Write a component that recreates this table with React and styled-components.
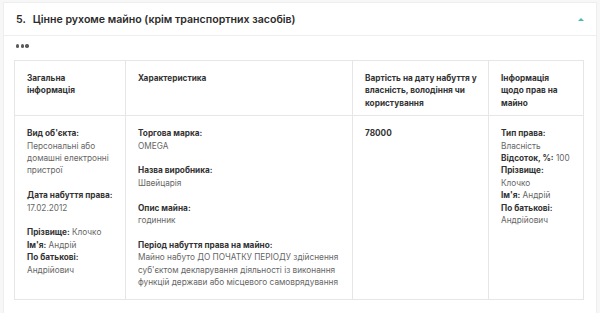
import React from "react";
import styled, { createGlobalStyle } from "styled-components";

const Global = createGlobalStyle`
  html, body { margin: 0; padding: 0; background: #f7f7f7; }
  body { font-family: Inter, "Noto Sans", sans-serif; color: #333; }
`;

const Page = styled.div`
  padding: 2px 3px 0 3px;
  height: 313px;
  box-sizing: border-box;
`;

const Card = styled.section`
  background: #fff;
  border: 1px solid #eeeeee;
  border-bottom: none;
  height: 311px;
  box-sizing: border-box;
`;

const Header = styled.div`
  display: flex;
  align-items: center;
  justify-content: space-between;
  height: 33px;
  box-sizing: border-box;
  padding: 0 12px 0 12px;
  border-bottom: 1px solid #eeeeee;
`;

const Title = styled.h2`
  margin: 0;
  font-size: 10.6px;
  font-weight: 600;
  color: #2b2b2b;
`;

const Num = styled.span`
  margin-right: 7px;
`;

const Caret = styled.span`
  width: 0;
  height: 0;
  border-left: 3px solid transparent;
  border-right: 3px solid transparent;
  border-bottom: 3px solid #4fb9ad;
`;

const Body = styled.div`
  padding: 8px 10px 0 10px;
`;

const Dots = styled.div`
  display: flex;
  gap: 1.3px;
  height: 4px;
  align-items: center;
  margin: 0 0 12px 2px;
`;

const Dot = styled.span`
  width: 3.4px;
  height: 3.4px;
  border-radius: 50%;
  background: #5a5a5a;
`;

const Table = styled.table`
  border-collapse: collapse;
  table-layout: fixed;
  width: 569px;
  font-size: 8.25px;
  line-height: 12.4px;
`;

const Th = styled.th`
  box-sizing: border-box;
  width: ${(p) => p.$w}px;
  text-align: left;
  vertical-align: top;
  font-weight: 700;
  color: #333;
  border: 1px solid #e6e6e6;
  padding: 11px 10px 6px 12px;
  height: 54px;
`;

const Td = styled.td`
  vertical-align: top;
  border: 1px solid #e6e6e6;
  padding: 11px 10px 11px 12px;
  color: #666;
`;

const Group = styled.div`
  margin-bottom: ${(p) => (p.$tight ? 0 : 12.4)}px;
`;

const Label = styled.span`
  font-weight: 700;
  color: #333;
  display: ${(p) => (p.$block ? "block" : "inline")};
`;

const Value = styled.span`
  color: #666;
  display: ${(p) => (p.$block ? "block" : "inline")};
`;

const Strong = styled.div`
  font-weight: 700;
  color: #333;
`;

export default function App() {
  return (
    <Page>
      <Global />
      <Card>
        <Header>
          <Title>
            <Num>5.</Num>Цінне рухоме майно (крім транспортних засобів)
          </Title>
          <Caret />
        </Header>
        <Body>
          <Dots>
            <Dot />
            <Dot />
            <Dot />
          </Dots>
          <Table>
            <thead>
              <tr>
                <Th $w={111}>Загальна інформація</Th>
                <Th $w={227}>Характеристика</Th>
                <Th $w={136}>Вартість на дату набуття у власність, володіння чи користування</Th>
                <Th $w={95}>Інформація щодо прав на майно</Th>
              </tr>
            </thead>
            <tbody>
              <tr>
                <Td>
                  <Group>
                    <Label $block>Вид об'єкта:</Label>
                    <Value $block>Персональні або домашні електронні пристрої</Value>
                  </Group>
                  <Group>
                    <Label $block>Дата набуття права:</Label>
                    <Value $block>17.02.2012</Value>
                  </Group>
                  <Group $tight>
                    <div><Label>Прізвище:</Label> <Value>Клочко</Value></div>
                    <div><Label>Ім'я:</Label> <Value>Андрій</Value></div>
                    <div><Label>По батькові:</Label> <Value>Андрійович</Value></div>
                  </Group>
                </Td>
                <Td>
                  <Group>
                    <Label $block>Торгова марка:</Label>
                    <Value $block>OMEGA</Value>
                  </Group>
                  <Group>
                    <Label $block>Назва виробника:</Label>
                    <Value $block>Швейцарія</Value>
                  </Group>
                  <Group>
                    <Label $block>Опис майна:</Label>
                    <Value $block>годинник</Value>
                  </Group>
                  <Group $tight>
                    <Label $block>Період набуття права на майно:</Label>
                    <Value $block>
                      Майно набуто ДО ПОЧАТКУ ПЕРІОДУ здійснення суб'єктом декларування діяльності із виконання функцій держави або місцевого самоврядування
                    </Value>
                  </Group>
                </Td>
                <Td>
                  <Strong>78000</Strong>
                </Td>
                <Td>
                  <Label $block>Тип права:</Label>
                  <Value $block>Власність</Value>
                  <div><Label>Відсоток, %:</Label> <Value>100</Value></div>
                  <Label $block>Прізвище:</Label>
                  <Value $block>Клочко</Value>
                  <div><Label>Ім'я:</Label> <Value>Андрій</Value></div>
                  <Label $block>По батькові:</Label>
                  <Value $block>Андрійович</Value>
                </Td>
              </tr>
            </tbody>
          </Table>
        </Body>
      </Card>
    </Page>
  );
}
